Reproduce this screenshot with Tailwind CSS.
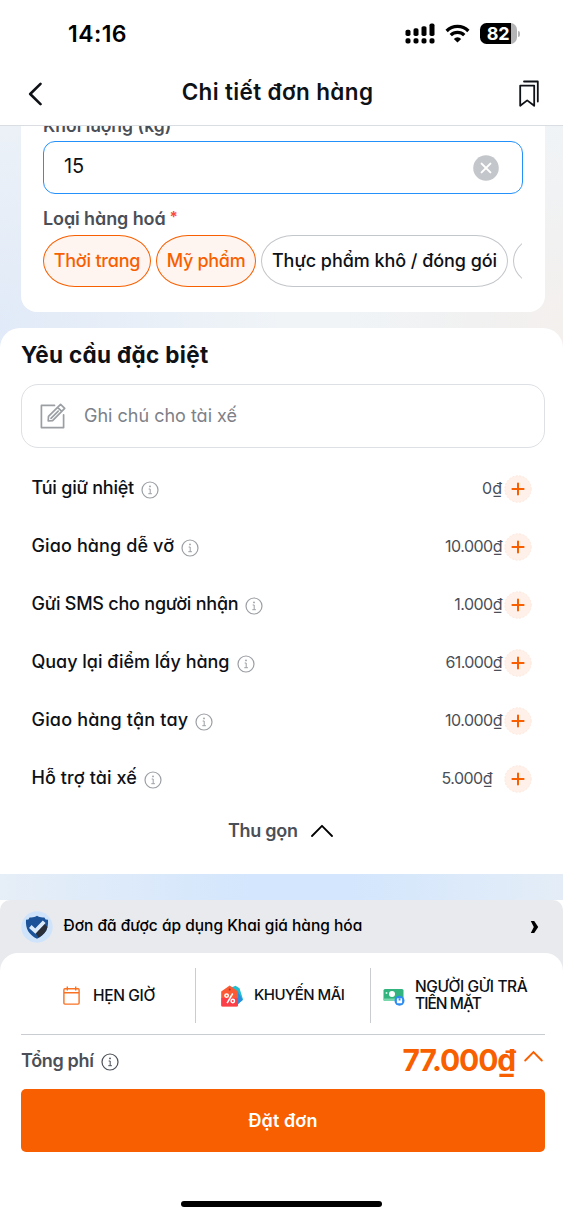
<!DOCTYPE html>
<html lang="vi">
<head>
<meta charset="utf-8">
<title>Chi tiết đơn hàng</title>
<script src="https://cdn.jsdelivr.net/npm/@tailwindcss/browser@4"></script>
</head>
<body class="w-[563px] h-[1218px] overflow-hidden bg-white text-[#0e1116] font-['Inter','Noto_Sans',sans-serif] [font-feature-settings:'cv11'] whitespace-nowrap">
<svg class="hidden">
  <symbol id="info" viewBox="0 0 18 18"><g fill="none" stroke="currentColor"><circle cx="9" cy="9" r="8" stroke-width="1.2"/><path d="M7.7 8h1.5v4.6M7.3 12.7h3.6" stroke-width="1"/></g><circle cx="9" cy="5.4" r=".9" fill="currentColor"/></symbol>
  <symbol id="plus" viewBox="0 0 28 28"><circle cx="14" cy="14" r="13.2" fill="#fff1e9" stroke="#fde3d5" stroke-width=".8" stroke-dasharray="2 1.5"/><path d="M14 8.4v11.2M8.4 14h11.2" stroke="#f75f00" stroke-width="2" stroke-linecap="round"/></symbol>
</svg>
<div class="flex flex-col h-full">
  <header class="h-[126px] shrink-0 border-b border-[#dadde1] flex flex-col">
    <div class="h-[67px] pl-[68px] pr-[43px] flex items-center justify-between">
      <span class="pt-[2px] text-[23px] font-semibold text-black tracking-[0.43px]">14:16</span>
      <div class="flex items-center gap-[10px]">
        <svg class="w-[30px] h-[21px]" viewBox="0 0 30 22" preserveAspectRatio="none"><g fill="#000"><rect x=".5" y="7" width="5" height="6.5" rx="1.8"/><rect x="8.5" y="5.5" width="5" height="8" rx="1.8"/><rect x="16.5" y="3.3" width="5" height="10.2" rx="1.8"/><rect x="24.5" y=".5" width="5" height="13" rx="1.8"/><rect x=".5" y="16" width="5" height="5.5" rx="1.8"/><rect x="8.5" y="16" width="5" height="5.5" rx="1.8"/><rect x="16.5" y="16" width="5" height="5.5" rx="1.8"/><rect x="24.5" y="16" width="5" height="5.5" rx="1.8"/></g></svg>
        <svg class="w-[25px] h-[19px]" viewBox="0 0 23 18"><g fill="none" stroke="#000" stroke-width="3.1"><path d="M1.2 6.6a14.6 14.6 0 0 1 20.6 0"/><path d="M5.1 10.6a9 9 0 0 1 12.8 0"/></g><path d="M11.5 17.6 8 14.1a5 5 0 0 1 7 0z" fill="#000"/></svg>
        <div class="flex items-center gap-[1px]">
          <div class="w-[37px] h-[21px] rounded-[6.5px] bg-[linear-gradient(90deg,#000_31px,#b4b4b6_31px)] flex items-center justify-center text-white text-[18px] font-bold tracking-[-0.3px]">82</div>
          <div class="w-[2.5px] h-[6px] rounded-r-full bg-[#b4b4b6]"></div>
        </div>
      </div>
    </div>
    <div class="h-[50px] pl-[28px] pr-[24px] flex items-center justify-between">
      <svg class="w-4 h-6 mt-[4px]" viewBox="0 0 16 24"><path d="M12.5 1.8 2.2 12 12.5 22.2" fill="none" stroke="#0e1116" stroke-width="2.6" stroke-linecap="round" stroke-linejoin="round"/></svg>
      <h1 class="text-[22.5px] font-semibold mr-[8px] tracking-[0.37px]">Chi tiết đơn hàng</h1>
      <svg class="w-[20px] h-[27px] mt-[3px]" viewBox="0 0 20 27"><g fill="none" stroke="#0e1116" stroke-width="1.8" stroke-linejoin="round" stroke-linecap="round"><path d="M1.2 5.6h14v20.2l-7-5.4-7 5.4z"/><path d="M5 1.5h13.8v20"/></g></svg>
    </div>
  </header>

  <main class="h-[774px] shrink-0 overflow-hidden flex flex-col gap-4 bg-[linear-gradient(90deg,#e6eef7_0%,#d3e6fd_45%,#d3e6fd_62%,#e4edf7_100%)]">
    <div class="-mb-[36px] pb-[36px] bg-[radial-gradient(circle_at_100%_90%,#f4f0ee,#f1f1f1_90px,transparent_220px),radial-gradient(circle_at_0_90%,#e1eaf8,transparent_280px)] bg-[#f0f4f7] shrink-0">
    <section class="ml-[21px] mr-[18px] h-[186px] rounded-b-[16px] bg-white pl-[22px] flex flex-col">
      <div class="h-[15px] overflow-hidden text-[17.5px] font-semibold text-[#4b4f57] leading-none flex flex-col justify-end"><span class="flex h-6 items-center mb-[7px]">Khối lượng (kg)</span></div>
      <div class="w-[479.5px] h-[53px] border-[1.5px] border-[#2491fb] rounded-[12px] flex items-center justify-between pl-5 pr-[23px]">
        <span class="text-[20px] pb-[3px] tracking-[-0.15px]">15</span>
        <svg class="w-[26px] h-[26px]" viewBox="0 0 26 26"><circle cx="13" cy="13" r="12.8" fill="#c3c6ca"/><path d="m8.6 8.6 8.8 8.8m0-8.8-8.8 8.8" stroke="#fff" stroke-width="2" stroke-linecap="round"/></svg>
      </div>
      <div class="h-[41px] pt-[7px] flex items-center gap-[5px] text-[18px] font-semibold text-[#4b4f57]"><span class="tracking-[-0.1px]">Loại hàng hoá</span><span class="text-[#fa4b3c] text-[15px] font-bold -mt-[2px] -ml-[1px]">*</span></div>
      <div class="w-[479px] h-[52px] overflow-hidden flex gap-[5px] text-[18px] font-medium">
        <div class="w-[108px] shrink-0 border-[1.5px] border-[#f75f00] bg-[#fff5f0] text-[#f75f00] rounded-[32px/26px] flex items-center justify-center pb-[2px] tracking-[-0.2px]">Thời trang</div>
        <div class="w-[100px] shrink-0 border-[1.5px] border-[#f75f00] bg-[#fff5f0] text-[#f75f00] rounded-[32px/26px] flex items-center justify-center pb-[2px] tracking-[-0.3px]">Mỹ phẩm</div>
        <div class="w-[247px] shrink-0 border-[1.5px] border-[#c3c6ca] rounded-[32px/26px] flex items-center justify-center pb-[2px] tracking-[-0.05px]">Thực phẩm khô / đóng gói</div>
        <div class="w-[100px] shrink-0 border-[1.5px] border-[#c3c6ca] rounded-[32px/26px]"></div>
      </div>
    </section>
    </div>

    <section class="h-[546px] shrink-0 rounded-t-[20px] bg-white pl-[21px] pr-[18px] flex flex-col">
      <h2 class="h-[56px] pb-[2px] flex items-center text-[22.5px] font-bold tracking-[0.32px]">Yêu cầu đặc biệt</h2>
      <div class="w-[524px] h-[64px] border-[1.5px] border-[#dde0e4] rounded-[17px] pl-[18px] flex items-center gap-[18px]">
        <svg class="w-[26px] h-[26px]" viewBox="0 0 26 26"><g fill="none" stroke="#9b9fa4" stroke-width="1.7" stroke-linejoin="round" stroke-linecap="round"><path d="M14.5 2.4H1.4v22.2h22.2V11.8"/><path d="m8.2 18 .3-4.6L20.6 1.3l4.1 4.1-12.1 12.2zM17.6 4.3l4.1 4.1M11 15.3l7.2-7.2"/></g></svg>
        <span class="text-[18px] text-[#7d8187] pb-[2px]">Ghi chú cho tài xế</span>
      </div>
      <div class="pt-[11px] pl-[10.5px] pr-[13px] flex flex-col text-[18px] font-medium">
        <div class="h-[58px] flex items-center"><span class="pb-[2px] tracking-[-0.22px]">Túi giữ nhiệt</span><svg class="w-[18px] h-[18px] ml-[7px] mt-[3px] text-[#9b9fa4]"><use href="#info"/></svg><span class="ml-auto text-[16px] font-normal text-[#4b4f57]">0₫</span><svg class="w-7 h-7 ml-[2px] mt-[2px]"><use href="#plus"/></svg></div>
        <div class="h-[58px] flex items-center"><span class="pb-[2px] tracking-[0.12px]">Giao hàng dễ vỡ</span><svg class="w-[18px] h-[18px] ml-[7px] mt-[3px] text-[#9b9fa4]"><use href="#info"/></svg><span class="ml-auto text-[16px] font-normal text-[#4b4f57] tracking-[-0.5px]">10.000₫</span><svg class="w-7 h-7 ml-[2px] mt-[2px]"><use href="#plus"/></svg></div>
        <div class="h-[58px] flex items-center"><span class="pb-[2px] tracking-[-0.23px]">Gửi SMS cho người nhận</span><svg class="w-[18px] h-[18px] ml-[7px] mt-[3px] text-[#9b9fa4]"><use href="#info"/></svg><span class="ml-auto text-[16px] font-normal text-[#4b4f57] tracking-[-0.5px]">1.000₫</span><svg class="w-7 h-7 ml-[2px] mt-[2px]"><use href="#plus"/></svg></div>
        <div class="h-[58px] flex items-center"><span class="pb-[2px] tracking-[-0.02px]">Quay lại điểm lấy hàng</span><svg class="w-[18px] h-[18px] ml-[7px] mt-[3px] text-[#9b9fa4]"><use href="#info"/></svg><span class="ml-auto text-[16px] font-normal text-[#4b4f57] tracking-[-0.6px]">61.000₫</span><svg class="w-7 h-7 ml-[2px] mt-[2px]"><use href="#plus"/></svg></div>
        <div class="h-[58px] flex items-center"><span class="pb-[2px] tracking-[0.18px]">Giao hàng tận tay</span><svg class="w-[18px] h-[18px] ml-[7px] mt-[3px] text-[#9b9fa4]"><use href="#info"/></svg><span class="ml-auto text-[16px] font-normal text-[#4b4f57] tracking-[-0.5px]">10.000₫</span><svg class="w-7 h-7 ml-[2px] mt-[2px]"><use href="#plus"/></svg></div>
        <div class="h-[58px] flex items-center"><span class="pb-[2px] tracking-[0.1px]">Hỗ trợ tài xế</span><svg class="w-[18px] h-[18px] ml-[7px] mt-[3px] text-[#9b9fa4]"><use href="#info"/></svg><span class="ml-auto text-[16px] font-normal text-[#4b4f57] tracking-[-0.5px]">5.000₫</span><svg class="w-7 h-7 ml-[12px] mt-[2px]"><use href="#plus"/></svg></div>
      </div>
      <div class="h-[47px] pl-[207px] flex items-center gap-[13px] text-[18px] font-semibold text-[#4b4f57]"><span class="tracking-[-0.3px]">Thu gọn</span><svg class="w-[22px] h-[13px]" viewBox="0 0 22 13"><path d="M1 12 11 1.8 21 12" fill="none" stroke="#000" stroke-width="1.8" stroke-linecap="round" stroke-linejoin="round"/></svg></div>
    </section>
  </main>

  <footer class="flex-1 flex flex-col bg-white">
    <div class="bg-[#e9eaee] rounded-t-[10px]">
      <div class="h-[53px] pl-[21px] pr-[24px] flex items-center">
        <svg class="w-8 h-8" viewBox="0 0 32 32"><circle cx="16" cy="16" r="15.7" fill="#cfe3fb"/><path d="M16 4.8c2 1.4 4.6 2 7.4 1.6l1.2 2 2.4.4c.6 9-2.800 15-11 19C7.800 23.800 4.400 17.800 5 8.800l2.400-.4 1.200-2c2.800.4 5.400-.2 7.400-1.600z" fill="#1b5298"/><path d="m14.500 21.500 9-8.500 3 3c-1 4.500-4 8-9 10.500z" fill="#2b2f3a"/><path d="m9.300 15.500 5 4.600 8.900-9.300" fill="none" stroke="#dcebfb" stroke-width="3.800"/></svg>
        <span class="ml-[10.5px] pb-[1px] text-[15.5px] font-medium text-black">Đơn đã được áp dụng Khai giá hàng hóa</span>
        <svg class="ml-auto w-[9px] h-[12px]" viewBox="0 0 9 12"><path d="M.8 0h3.4L8.200 6l-4 6H.8l3-6z" fill="#000"/></svg>
      </div>
      <div class="rounded-t-[18px] bg-white pl-[21px] pr-[18px] flex flex-col">
        <div class="h-[82px] pt-[4px] border-b-[1.5px] border-[#c9cdd2] flex items-center text-[15.5px] font-medium">
          <div class="w-[175px] h-[55px] pl-[42px] border-r-[1.5px] border-[#c9cdd2] flex items-center gap-[13px]">
            <svg class="w-[17px] h-[19px]" viewBox="0 0 17 19"><g fill="none" stroke="#f97224" stroke-width="1.4"><rect x=".9" y="2.8" width="15.2" height="15.3" rx="1"/><path d="M1 6.7h15M4.3.5v4M12.7.5v4"/></g></svg>
            <span class="tracking-[-0.35px]">HẸN GIỜ</span>
          </div>
          <div class="w-[175px] h-[55px] pl-[25px] border-r-[1.5px] border-[#c9cdd2] flex items-center gap-[11px]">
            <svg class="w-[22px] h-[22px]" viewBox="0 0 22 22"><path d="M8 3.500 14.500.8l4 2.500L22 14.500l-5.500 5z" fill="#1fbfd0"/><path d="m17 7 4.800 8-4.800 4z" fill="#2b8fe0"/><path d="M8.700.6 17 6.500v13.700a1.300 1.300 0 0 1-1.300 1.300H1.500A1.300 1.300 0 0 1 .2 20.200V6.500z" fill="#fb5a35"/><path d="M.2 13H17v7.200a1.300 1.300 0 0 1-1.300 1.300H1.500A1.300 1.300 0 0 1 .2 20.200z" fill="#fb2d55" opacity=".6"/><circle cx="8.700" cy="4.600" r="1" fill="#a83a1c"/><g fill="none" stroke="#fff" stroke-width="1.500"><circle cx="5.600" cy="10.600" r="1.700"/><circle cx="11.800" cy="16" r="1.700"/><path d="m11.700 8.500-5.600 9.600"/></g></svg>
            <span class="text-[15px] tracking-[-0.55px]">KHUYẾN MÃI</span>
          </div>
          <div class="pl-[12px] flex items-center gap-[10px]">
            <svg class="w-[22px] h-[18px] mt-[2px]" viewBox="0 0 22 18"><rect x=".5" y="1" width="20" height="12" rx="1.500" fill="#33b47e"/><path d="M.5 10.500h20v1a1.500 1.500 0 0 1-1.500 1.500H2a1.500 1.500 0 0 1-1.500-1.500z" fill="#7ad8ae"/><circle cx="9" cy="6" r="3" fill="#fff"/><circle cx="3.500" cy="5" r="1" fill="#d5f5e6"/><circle cx="16.500" cy="12.800" r="5" fill="#2f8df2"/><rect x="13.900" y="10.300" width="5.200" height="5" rx=".8" fill="#fff"/><path d="M15.600 10.300h1.900v2.200h-1.900z" fill="#2f8df2"/></svg>
            <div class="flex flex-col leading-[16.5px]"><span class="self-start tracking-[-0.4px]">NGƯỜI GỬI TRẢ</span><span class="self-start tracking-[-0.95px]">TIỀN MẶT</span></div>
          </div>
        </div>
        <div class="h-[54px] pr-[2px] pb-[3px] flex items-center">
          <span class="text-[18px] font-semibold text-[#4b4f57] tracking-[-0.33px]">Tổng phí</span><svg class="w-[18px] h-[18px] ml-[7px] mt-[2px] text-[#4b4f57]"><use href="#info"/></svg>
          <span class="ml-auto text-[30px] font-bold text-[#f75f00] tracking-[-1.15px]">77.000₫</span>
          <svg class="w-[19px] h-[12px] ml-[9px] -mt-[9px]" viewBox="0 0 19 12"><path d="M1.2 10.5 9.5 2l8.300 8.500" fill="none" stroke="#f75f00" stroke-width="1.9" stroke-linecap="round"/></svg>
        </div>
        <button class="h-[63px] rounded-[5px] bg-[#f75f00] text-white text-[18px] font-semibold tracking-[0.1px]">Đặt đơn</button>
        <div class="mt-[49px] ml-[160px] w-[201px] h-[6px] rounded-full bg-black"></div>
      </div>
    </div>
  </footer>
</div>
</body>
</html>
